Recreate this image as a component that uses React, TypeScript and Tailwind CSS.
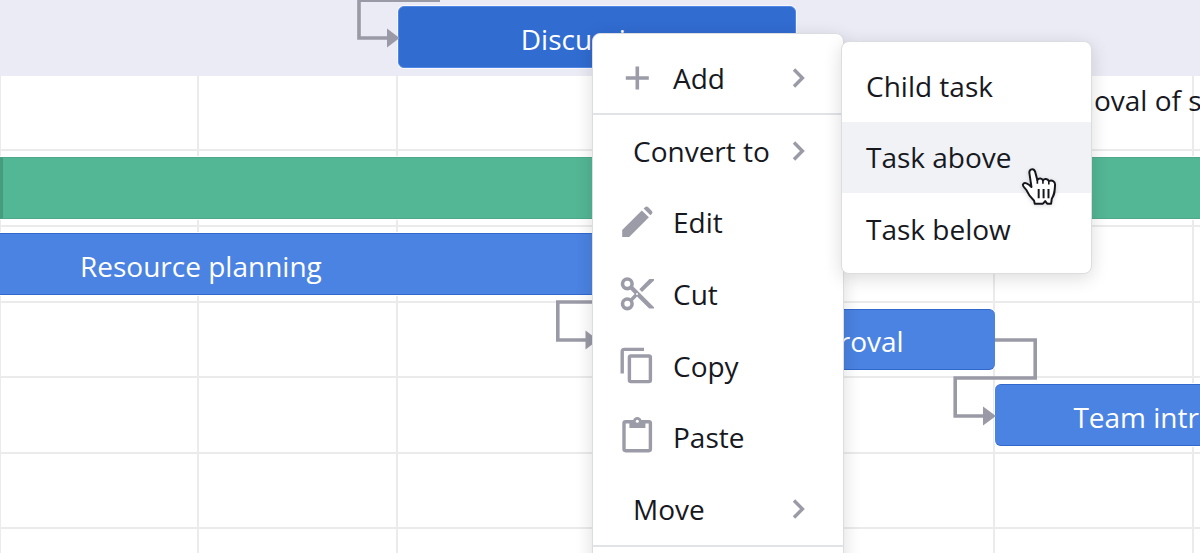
import type { ReactNode } from "react";
import { clsx } from "clsx";

interface Task {
  name?: string;
  span: string;
  kind: "active" | "task" | "group" | "label";
  align?: string;
}

interface Row {
  id: number;
  highlighted?: boolean;
  task?: Task;
}

interface MenuEntry {
  label: string;
  icon?: ReactNode;
  submenu?: boolean;
}

const COLUMNS = [1, 2, 3, 4, 5, 6, 7];

const ROWS: Row[] = [
  { id: 1, highlighted: true, task: { name: "Discussions", span: "col-start-3 col-span-2", kind: "active", align: "items-center justify-center rounded-md pt-1" } },
  { id: 2, task: { name: "Removal of scope", span: "col-start-6 col-span-2", kind: "label", align: "items-start pl-10" } },
  { id: 3, task: { span: "col-start-1 col-span-7", kind: "group" } },
  { id: 4, task: { name: "Resource planning", span: "col-start-1 col-span-3", kind: "task", align: "items-center rounded-r-md pt-1 pl-20" } },
  { id: 5, task: { name: "Budget approval", span: "col-start-4 col-span-2", kind: "task", align: "items-center justify-center rounded-md pt-1" } },
  { id: 6, task: { name: "Team introduction", span: "col-start-6 col-span-2", kind: "task", align: "items-center justify-center rounded-md pt-1" } },
  { id: 7 },
  { id: 8 },
];

const barStyles: Record<Task["kind"], string> = {
  active: "border border-[#5288e4] bg-[#316cd1] text-white ring-1 ring-white/60",
  task: "border-y border-[#3068cc] bg-[#4b83e2] text-white ring-1 ring-white",
  group: "border-y border-l-3 border-y-[#50a88a] border-l-[#479c7d] bg-[#53b695] ring-1 ring-white",
  label: "text-[#17191f]",
};

function PlusIcon() {
  return (
    <svg viewBox="0 0 40 40" className="size-10" aria-hidden="true">
      <path d="M20.3 8.5v23M8.8 20h23" stroke="currentColor" strokeWidth="3.6" fill="none" />
    </svg>
  );
}

function EditIcon() {
  return (
    <svg viewBox="0 0 40 40" className="size-10" fill="currentColor" aria-hidden="true">
      <path d="M5.2 35V28L24.8 8.4 31.9 15.3 12.2 35Z" />
      <path d="M26.6 6.6 28.6 4.8Q29.8 3.9 31 5L34.9 8.9Q36 10.2 35 11.5L33.4 13.2Z" />
    </svg>
  );
}

function CutIcon() {
  return (
    <svg viewBox="0 0 40 40" className="size-10" fill="currentColor" aria-hidden="true">
      <circle cx="10.3" cy="9.8" r="4.8" fill="none" stroke="currentColor" strokeWidth="3.6" />
      <circle cx="10.3" cy="29.8" r="4.8" fill="none" stroke="currentColor" strokeWidth="3.6" />
      <path d="M15.3 11.6 37 33.2V34.5H32.2L20 22.6 15 27.8 12.6 25.2 17.6 20 12.6 14.8Z" />
      <path d="M22.3 15.2 32.4 5.1H37V6.4L25 18Z" />
      <circle cx="20" cy="19.9" r="1" fill="white" />
    </svg>
  );
}

function CopyIcon() {
  return (
    <svg viewBox="0 0 40 40" className="size-10" fill="none" stroke="currentColor" strokeWidth="3.4" aria-hidden="true">
      <path d="M27 3.4H7.2Q5.2 3.4 5.2 5.4V27.4" />
      <rect x="12.4" y="10" width="21" height="25.6" rx="1.6" />
    </svg>
  );
}

function PasteIcon() {
  return (
    <svg viewBox="0 0 40 40" className="size-10" aria-hidden="true">
      <rect x="7" y="4.8" width="26.4" height="28.9" rx="1.6" fill="none" stroke="currentColor" strokeWidth="3.4" />
      <path d="M12.4 4H28.4V11H12.4Z" fill="currentColor" />
      <circle cx="20.3" cy="4.2" r="4.2" fill="currentColor" />
      <circle cx="20.3" cy="4.2" r="1.5" fill="white" />
    </svg>
  );
}

function ChevronIcon() {
  return (
    <svg viewBox="0 0 24 24" className="ml-auto size-6 text-[#9a9ba6]" fill="none" aria-hidden="true">
      <path d="M7 3.5 15.4 12 7 20.5" stroke="currentColor" strokeWidth="3.4" />
    </svg>
  );
}

function HandCursor() {
  return (
    <svg viewBox="30 20 110 120" className="pointer-events-none absolute top-[125px] left-[179px] h-10 w-9 drop-shadow-sm" aria-hidden="true">
      <path
        d="M56 40C53 24 69 21 73 33L80 59C84 52 94 53 97 60 101 53 112 54 115 62 124 58 135 62 134 74 133 94 133 102 124 116L122 131H110L104 123 97 131H72L70 122C60 112 52 102 47 90 42 82 34 78 36 72 40 64 52 69 62 80Z"
        fill="white"
        stroke="#16171c"
        strokeWidth="6"
        strokeLinejoin="round"
      />
      <path d="M80 58V70M97 60V70M115 63V72" stroke="#16171c" strokeWidth="5" />
      <path d="M84 86V114M99 86V114M114 86V114" stroke="#16171c" strokeWidth="6" />
    </svg>
  );
}

const EDIT_ENTRIES: MenuEntry[] = [
  { label: "Convert to", submenu: true },
  { label: "Edit", icon: <EditIcon /> },
  { label: "Cut", icon: <CutIcon /> },
  { label: "Copy", icon: <CopyIcon /> },
  { label: "Paste", icon: <PasteIcon /> },
  { label: "Move", submenu: true },
];

const ADD_ENTRIES = ["Child task", "Task above", "Task below"];

function MenuItem({ label, icon, submenu }: MenuEntry) {
  return (
    <button type="button" role="menuitem" aria-haspopup={submenu ? "menu" : undefined} className="flex w-full items-center pr-8 pl-6 text-left">
      {icon && <span className="text-[#9b9ca8]">{icon}</span>}
      <span className="ml-4">{label}</span>
      {submenu && <ChevronIcon />}
    </button>
  );
}

function TimelineRow({ highlighted, task }: Row) {
  return (
    <div className={clsx("grid grid-cols-[repeat(7,199px)]", highlighted && "bg-[#ebebf5]")}>
      {COLUMNS.map((col) => (
        <div
          key={col}
          style={{ gridColumn: col }}
          className={clsx("row-start-1", !highlighted && "border-r-2 border-b-2 border-[#ebebec] first:border-l")}
        />
      ))}
      {task && (
        <div className={clsx("row-start-1 mt-1.5 mb-2 flex whitespace-nowrap", task.span, task.align, barStyles[task.kind])}>
          {task.name && <span>{task.name}</span>}
        </div>
      )}
    </div>
  );
}

/* Dependency arrows between tasks */
function Dependencies() {
  return (
    <svg width="1200" height="605" className="pointer-events-none absolute top-0 left-0 text-[#9a9aa6]" aria-hidden="true">
      <g fill="none" stroke="currentColor" strokeWidth="3.6">
        <path d="M440 0.2H359V38H388" />
        <path d="M640 302H557.8V340H587" />
        <path d="M995 340H1035.2V378H955.2V416H984" />
      </g>
      <g fill="currentColor">
        <path d="M387 28.5 399.5 38 387 47.5Z" />
        <path d="M585.5 330.5 598 340 585.5 349.5Z" />
        <path d="M983 406.5 996 416 983 425.5Z" />
      </g>
    </svg>
  );
}

export default function App() {
  return (
    <main className="relative h-screen overflow-hidden bg-white font-['Open_Sans','Noto_Sans',sans-serif] text-[28px] leading-9 text-[#17191f]">
      <section aria-label="Timeline" className="grid h-[605px] grid-rows-8">
        {ROWS.map((row) => (
          <TimelineRow key={row.id} {...row} />
        ))}
      </section>

      <Dependencies />

      {/* Context menu */}
      <div role="menu" aria-label="Task actions" className="absolute top-[33px] left-[592px] w-[252px] rounded-lg border border-[#dcdde0] bg-white pt-2 pb-20 shadow-[0_4px_18px_rgba(0,0,0,0.14)]">
        <div className="grid h-[73px] border-b-2 border-[#e2e3e6]">
          <MenuItem label="Add" icon={<PlusIcon />} submenu />
        </div>
        <div className="grid h-[432px] grid-rows-6 border-b-2 border-[#e2e3e6]">
          {EDIT_ENTRIES.map((entry) => (
            <MenuItem key={entry.label} {...entry} />
          ))}
        </div>
      </div>

      {/* "Add" submenu */}
      <div role="menu" aria-label="Add" className="absolute top-[41px] left-[841px] w-[251px] rounded-lg border border-[#dcdde0] bg-white py-2 shadow-[0_4px_18px_rgba(0,0,0,0.14)]">
        <div className="grid h-[215px] grid-rows-3">
          {ADD_ENTRIES.map((label) => (
            <button
              key={label}
              type="button"
              role="menuitem"
              className={clsx("flex w-full items-center px-6 text-left", label === "Task above" && "bg-[#f0f2f6]")}
            >
              {label}
            </button>
          ))}
        </div>
        <HandCursor />
      </div>
    </main>
  );
}
